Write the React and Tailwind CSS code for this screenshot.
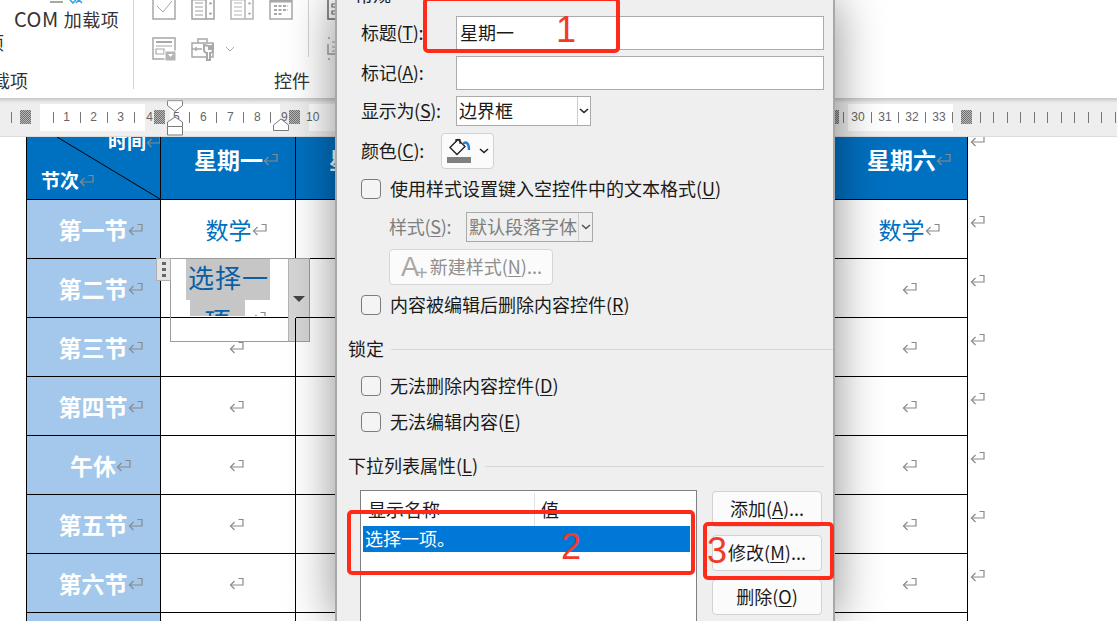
const ReturnMark = ({ className = '' }) => (
  <svg width="15" height="13" viewBox="0 0 15 13" fill="none" stroke="#8a8a8a" strokeWidth="1.2" className={`shrink-0 ${className}`}>
    <path d="M9.5 1.5h4.5v6.5H1.5" />
    <path d="M5.5 4L1.5 8l4 4" />
  </svg>
)

const Tick = () => (
  <div className="w-[13.5px] shrink-0 flex justify-center">
    <div className="w-px h-[11px] bg-[#777777]" />
  </div>
)

const Num = ({ children }) => (
  <div className="w-[13.5px] shrink-0 flex justify-center text-[12px] leading-none text-[#666666] whitespace-nowrap">{children}</div>
)

const Hatch = ({ className }) => (
  <div className={`h-[14px] shrink-0 bg-[repeating-conic-gradient(#707070_0_25%,#b8b8b8_0_50%)] bg-[length:2px_2px] ${className}`} />
)

const Ruler = () => (
  <div className="relative h-[39px] shrink-0 flex items-center bg-[#eeeeee] border-b border-[#dcdcdc] overflow-hidden font-['Liberation_Sans',sans-serif]">
    <div className="w-[20px] shrink-0 flex pl-[5px]"><Tick /></div>
    <Hatch className="w-[11px]" />
    <div className="w-[9px] shrink-0" />
    <div className="w-[105px] h-[27px] shrink-0 bg-white flex items-center pl-[6.25px]">
      <Tick /><Num>1</Num><Tick /><Num>2</Num><Tick /><Num>3</Num><Tick />
    </div>
    <div className="w-[9px] shrink-0 flex justify-center text-[12px] leading-none text-[#666666]">4</div>
    <Hatch className="w-[11px]" />
    <div className="w-[4.5px] shrink-0" />
    <div className="w-[110px] h-[27px] shrink-0 bg-white flex items-center">
      <Num>5</Num><Tick /><Num>6</Num><Tick /><Num>7</Num><Tick /><Num>8</Num><Tick />
    </div>
    <div className="w-[9.5px] shrink-0 flex justify-center text-[12px] leading-none text-[#666666]">9</div>
    <Hatch className="w-[11px]" />
    <div className="w-[9px] shrink-0" />
    <div className="w-[524px] h-[27px] shrink-0 bg-white flex items-center text-[12px] text-[#666666] leading-none">
      <span className="-ml-[3px]">10</span>
    </div>
    <Hatch className="w-[6px]" />
    <div className="w-[9px] shrink-0 flex justify-center"><div className="w-px h-[11px] bg-[#777777]" /></div>
    <div className="w-[105px] h-[27px] shrink-0 bg-white flex items-center pl-[3.25px]">
      <Num>30</Num><Tick /><Num>31</Num><Tick /><Num>32</Num><Tick /><Num>33</Num><Tick />
    </div>
    <div className="w-[8px] shrink-0" />
    <Hatch className="w-[11px]" />
    <div className="w-[1.25px] shrink-0" />
    {Array.from({ length: 11 }).map((_, i) => <Tick key={i} />)}
    {/* indent markers */}
    <svg width="18" height="38" viewBox="0 0 18 38" fill="#ffffff" stroke="#7a7a7a" className="absolute left-[166px] top-0">
      <path d="M1.5 2.5h15v5l-7.5 6-7.5-6z" />
      <path d="M9 19l7.5 5v4.5h-15V24z" />
      <path d="M1.5 28.5h15v8.5h-15z" />
    </svg>
    <svg width="18" height="14" viewBox="0 0 18 14" fill="#ffffff" stroke="#7a7a7a" className="absolute left-[272px] top-[20px]">
      <path d="M9 1l7.5 6v5.5h-15V7z" />
    </svg>
    <div className="absolute inset-x-0 top-0 h-[5px] bg-gradient-to-b from-[#c8c8c8] to-transparent" />
  </div>
)

const IconCheck = () => (
  <svg width="24" height="24" viewBox="0 0 24 24" fill="none" stroke="#a8a8a8" strokeWidth="1.5">
    <path d="M1 -3h22v24H1z" />
    <path d="M5 8l6 6L20 3" strokeWidth="1" />
  </svg>
)

const IconSpin = ({ light }) => (
  <svg width="24" height="24" viewBox="0 0 24 24" fill="none" stroke={light ? '#b4b4b4' : '#a0a0a0'} strokeWidth="1.5">
    <path d="M1 -3h22v24H1z" />
    <path d="M15 -3v24" />
    <path d="M4 5h8M4 9h8M4 13h8M4 17h8" strokeWidth="1.2" />
    <path d="M1 1h14" strokeWidth="3" />
    <path d="M18 6l1.5-2 1.5 2zM18 15l1.5 2 1.5-2z" fill="#a0a0a0" strokeWidth="0.5" />
  </svg>
)

const IconCalendar = () => (
  <svg width="24" height="24" viewBox="0 0 24 24" fill="none" stroke="#a8a8a8" strokeWidth="1.5">
    <path d="M1 -3h22v24H1z" />
    <path d="M1 3h22" strokeWidth="3" />
    <path d="M5 8h14M5 12h14M5 16h9" strokeWidth="2.2" strokeDasharray="3 1.5" />
  </svg>
)

const IconForm = () => (
  <svg width="25" height="24" viewBox="0 0 25 24" fill="none" stroke="#a8a8a8" strokeWidth="1.5">
    <path d="M1 1h22v21H1z" />
    <path d="M4 5h16" strokeWidth="2" />
    <path d="M4 9h16" strokeWidth="1" />
    <path d="M4 12h8v5H4z" strokeWidth="1.2" />
    <path d="M13 14h11v10H13z" fill="#b5b5b5" stroke="#ffffff" strokeWidth="1" />
    <path d="M16 17h5l-2.5 3z" fill="#ffffff" stroke="none" />
  </svg>
)

const IconTools = () => (
  <svg width="25" height="24" viewBox="0 0 25 24" fill="none" stroke="#a8a8a8" strokeWidth="1.5">
    <path d="M1 6h21v14H1z" />
    <path d="M7 6V2h9v4M1 12h10" />
    <path d="M5 10v4" />
    <path d="M13 8v5c0 2 2 3 3 3v7h3v-7c1 0 3-1 3-3V8l-2 1v3h-2V9z" fill="#ffffff" strokeWidth="2" />
  </svg>
)

const IconPartial = ({ dark }) => (
  <svg width="9" height="24" viewBox="0 0 9 24" fill="none" stroke={dark ? '#6a6a6a' : '#a8a8a8'} strokeWidth="1.5">
    {dark ? (
      <>
        <path d="M1 -3v24h8" />
        <path d="M5 6h4v3H5zM5 13h4v3H5z" strokeWidth="1.2" />
      </>
    ) : (
      <>
        <path d="M1 1h2M1 22h2M1 7v10h8" />
        <path d="M5 5h4M5 10h4M5 14h4" strokeWidth="1.2" />
      </>
    )}
  </svg>
)

const Ribbon = () => (
  <div className="h-[98px] shrink-0 bg-white flex overflow-hidden text-[18px] leading-none text-[#333333]">
    <div className="w-[134px] h-[89px] shrink-0 border-r border-[#d4d4d4] flex flex-col">
      <svg width="36" height="4" viewBox="0 0 36 4" fill="none" strokeWidth="1.5" className="ml-[50px] shrink-0">
        <path d="M0 2h13" stroke="#8a8a8a" />
        <path d="M20 0l3 3 3-3M26 3l3-3 3 3" stroke="#2b9fe0" />
      </svg>
      <div className="pl-[14px] mt-[5px] whitespace-nowrap tracking-[0.5px]"><span className="text-[20px] mr-[5px]">COM</span>加载项</div>
      <div className="-ml-[14px] mt-[4px]">项</div>
      <div className="-ml-[26px] mt-[20px] whitespace-nowrap">加载项</div>
    </div>
    <div className="w-[174px] shrink-0 pl-[18px]">
      <div className="flex gap-[15px] -mt-[2px]">
        <IconCheck /><IconSpin /><IconSpin light /><IconCalendar />
      </div>
      <div className="flex items-center gap-[14px] mt-[15px]">
        <IconForm />
        <IconTools />
        <svg width="10" height="6" viewBox="0 0 10 6" fill="none" stroke="#aaaaaa" className="-ml-[5px]"><path d="M1 1l4 4 4-4" /></svg>
      </div>
      <div className="ml-[122px] mt-[10px] whitespace-nowrap">控件</div>
    </div>
    <div className="w-px h-[57px] bg-[#d4d4d4] shrink-0" />
    <div className="pl-[18px] flex flex-col">
      <div className="-mt-[2px]"><IconPartial dark /></div>
      <div className="mt-[15px]"><IconPartial /></div>
    </div>
  </div>
)

const COLS = ['w-[134px]', 'w-[135px]', 'w-[135px]', 'w-[135px]', 'w-[135px]', 'w-[134px]', 'w-[133px]']
const DAYS = ['星期一', '星期二', '星期三', '星期四', '星期五', '星期六']
const PERIODS = ['第二节', '第三节', '第四节', '午休', '第五节', '第六节', '第七节']

const Cell = ({ width, className = '', children }) => (
  <div className={`${width} shrink-0 border-r border-b border-black flex items-center justify-center pl-[16px] ${className}`}>
    {children}
  </div>
)

const HeadCorner = () => (
  <div className="relative w-[134px] shrink-0 border-r border-b border-black bg-[#0070c0] text-white font-bold text-[19px] leading-[22px] overflow-hidden">
    <div className="flex items-center justify-end -mr-[1px] -mt-[7px]">
      <span>时间</span><ReturnMark />
    </div>
    <div className="flex items-center pl-[14px] mt-[17px]">
      <span>节次</span><ReturnMark />
    </div>
    <svg className="absolute inset-0 w-full h-full" viewBox="0 0 133 62" fill="none" stroke="#000000">
      <path d="M30 0l103 62" />
    </svg>
  </div>
)

const DocTable = () => (
  <div className="flex-1 bg-white overflow-hidden pl-[26px] text-[23px] leading-none">
    <div className="flex h-[63px]">
      <div className="flex border-l border-black">
        <HeadCorner />
        {DAYS.map((d, i) => (
          <Cell key={d} width={COLS[i + 1]} className="bg-[#0070c0] text-white font-bold text-[23px] pb-[18px]">
            <span>{d}</span><ReturnMark />
          </Cell>
        ))}
      </div>
      <div className="pl-[2px] -mt-[3px]"><ReturnMark /></div>
    </div>
    <div className="flex h-[59px]">
      <div className="flex border-l border-black">
        <Cell width={COLS[0]} className="bg-[#a3c8eb] text-white font-bold pr-[2px]">
          <span className="pt-px">第一节</span><ReturnMark />
        </Cell>
        {DAYS.map((d, i) => (
          <Cell key={d} width={COLS[i + 1]} className="text-[#0070c0]">
            <span className="pt-px">数学</span><ReturnMark />
          </Cell>
        ))}
      </div>
      <div className="pl-[2px] pt-[15px]"><ReturnMark /></div>
    </div>
    {PERIODS.map((p, r) => (
      <div key={p} className="flex h-[59px]">
        <div className="flex border-l border-black">
          <Cell width={COLS[0]} className="bg-[#a3c8eb] text-white font-bold pr-[2px]">
            <span className="pt-px">{p}</span><ReturnMark />
          </Cell>
          {DAYS.map((d, i) => (
            <Cell key={d} width={COLS[i + 1]} className="relative">
              <ReturnMark />
              {r === 0 && i === 0 && <ContentControl />}
            </Cell>
          ))}
        </div>
        <div className="pl-[2px] pt-[15px]"><ReturnMark /></div>
      </div>
    ))}
  </div>
)

const ContentControl = () => (
  <div className="absolute left-[9px] -top-px w-[140px] h-[84px] border border-[#9c9c9c] flex">
    <div className="absolute -left-[15px] -top-px w-[15px] h-[23px] bg-[#e4e4e4] border border-[#b0b0b0] flex flex-col items-center justify-center gap-[3px]">
      <div className="w-[4px] h-[3px] bg-[#666666]" />
      <div className="w-[4px] h-[3px] bg-[#666666]" />
      <div className="w-[4px] h-[3px] bg-[#666666]" />
    </div>
    <div className="flex-1 h-[57px] pr-[3px] bg-white overflow-hidden flex flex-col items-center text-[26px] text-[#0b5fa5] font-normal">
      <div className="bg-[#c6c6c6] h-[41px] flex items-center px-[2px] pb-[5px] tracking-[1px] pr-[1px] shrink-0">选择一</div>
      <div className="flex items-start shrink-0">
        <div className="bg-[#c6c6c6] w-[55px] h-[40px] text-center leading-[40px]">项</div>
        <ReturnMark className="ml-[6px] mt-[11px]" />
      </div>
    </div>
    <div className="w-[21px] bg-[#d6d6d6] border-l border-[#b4b4b4] flex items-center justify-center pb-[3px]">
      <div className="w-0 h-0 border-x-[6px] border-x-transparent border-t-[6px] border-t-[#444444]" />
    </div>
  </div>
)

const Chevron = ({ color = '#222222' }) => (
  <svg width="10" height="6" viewBox="0 0 10 6" fill="none" stroke={color} strokeWidth="1.6"><path d="M1 1l4 3.5L9 1" /></svg>
)

const Check = ({ mt, children }) => (
  <div className={`flex items-center h-[20px] pl-[24px] ${mt}`}>
    <div className="w-[20px] h-[20px] rounded-[4px] border-[1.5px] border-[#7c7c7c] bg-[#f4f4f4] shrink-0" />
    <div className="ml-[9px] pb-[3px] whitespace-nowrap">{children}</div>
  </div>
)

const U = ({ children }) => <span className="underline underline-offset-2 decoration-1">{children}</span>

const Section = ({ mt, children }) => (
  <div className={`flex items-center h-[24px] pl-[11px] ${mt}`}>
    <span className="whitespace-nowrap pb-[3px]">{children}</span>
    <div className="flex-1 h-px bg-[#d8d8d8] ml-[7px]" />
  </div>
)

const SideButton = ({ mt, children }) => (
  <div className={`h-[36px] rounded-[4px] border border-[#d2d2d2] bg-[#fbfbfb] flex items-center justify-center pb-[2px] ${mt}`}>{children}</div>
)

const Dialog = () => (
  <div className="absolute left-[335px] top-0 w-[500px] h-[621px] overflow-hidden bg-[#efefef] border-x-2 border-[#a8a8a8] text-[18px] leading-none text-[#1a1a1a] shadow-[0_0_45px_rgba(0,0,0,0.45)]">
    <div className="h-[16px] overflow-hidden relative">
      <span className="absolute left-[18px] -top-[15px]">常规</span>
    </div>
    <div className="flex items-center h-[34px] pl-[24px]">
      <div className="w-[95px] pb-[3px] whitespace-nowrap tracking-[-0.3px]">标题(<U>T</U>):</div>
      <div className="w-[368px] h-[34px] bg-white border border-[#aaaaaf] flex items-center pl-[3px] pb-[3px]">星期一</div>
    </div>
    <div className="flex items-center h-[34px] pl-[24px] mt-[6px]">
      <div className="w-[95px] pb-[3px] whitespace-nowrap tracking-[-0.3px]">标记(<U>A</U>):</div>
      <div className="w-[368px] h-[34px] bg-white border border-[#aaaaaf]" />
    </div>
    <div className="flex items-center h-[30px] pl-[24px] mt-[6px]">
      <div className="w-[95px] pb-[3px] whitespace-nowrap tracking-[-0.3px]">显示为(<U>S</U>):</div>
      <div className="w-[135px] h-[30px] bg-white border border-[#aaaaaa] flex items-center pl-[2px]">
        <span className="flex-1 pb-[3px]">边界框</span>
        <div className="w-[13px] h-full border-l border-[#cccccc] flex items-center justify-center"><Chevron /></div>
      </div>
    </div>
    <div className="flex items-center h-[36px] pl-[24px] mt-[7px]">
      <div className="w-[80px] pb-[3px] whitespace-nowrap tracking-[-0.3px]">颜色(<U>C</U>):</div>
      <div className="w-[53px] h-[36px] rounded-[4px] border border-[#d2d2d2] bg-[#fbfbfb] flex items-center pl-[5px] gap-[7px]">
        <svg width="25" height="26" viewBox="0 0 25 26" fill="none">
          <path d="M11 1.5l7 7-8 8-7-7z" stroke="#222222" strokeWidth="1.4" fill="#ffffff" />
          <path d="M9 4V1.5h4V6" stroke="#222222" strokeWidth="1.2" />
          <path d="M16 6c3-3 6-1 6 6" stroke="#1c7fd0" strokeWidth="2.4" />
          <path d="M0 19h24v6H0z" fill="#808080" />
        </svg>
        <Chevron />
      </div>
    </div>
    <Check mt="mt-[10px]">使用样式设置键入空控件中的文本格式(<U>U</U>)</Check>
    <div className="flex items-center h-[30px] pl-[52px] mt-[13px] text-[#7e7e7e]">
      <div className="w-[77px] pb-[3px] whitespace-nowrap tracking-[-0.3px]">样式(<U>S</U>):</div>
      <div className="w-[127px] h-[30px] border border-[#aaaaaa] flex items-center pl-[2px]">
        <span className="flex-1 pb-[3px] whitespace-nowrap">默认段落字体</span>
        <div className="w-[14px] h-full border-l border-[#cccccc] flex items-center justify-center shrink-0"><Chevron color="#555555" /></div>
      </div>
    </div>
    <div className="ml-[52px] mt-[7px] w-[164px] h-[36px] rounded-[4px] border border-[#d6d6d6] bg-[#fbfbfb] flex items-center pl-[11px] text-[#8e8e8e] whitespace-nowrap">
      <span className="text-[27px] text-[#a8a8a8] font-['Liberation_Sans',sans-serif]">A</span>
      <span className="text-[20px] text-[#a8a8a8] mt-[12px] -ml-[3px] mr-[2px] font-['Liberation_Sans',sans-serif]">+</span>
      <span className="pb-[3px]">新建样式(<U>N</U>)...</span>
    </div>
    <Check mt="mt-[10px]">内容被编辑后删除内容控件(<U>R</U>)</Check>
    <Section mt="mt-[22px]">锁定</Section>
    <Check mt="mt-[15px]">无法删除内容控件(<U>D</U>)</Check>
    <Check mt="mt-[16px]">无法编辑内容(<U>E</U>)</Check>
    <div className="pr-[9px]"><Section mt="mt-[22px]">下拉列表属性(<U>L</U>)</Section></div>
    <div className="flex pl-[23px] mt-[12px]">
      <div className="w-[337px] h-[140px] shrink-0 bg-white border border-[#7f7f87] pl-[2px]">
        <div className="flex h-[35px] pt-[2px]">
          <div className="w-[172px] border-r border-[#e2e2e2] pl-[5px] pt-[7px] whitespace-nowrap">显示名称</div>
          <div className="pl-[6px] pt-[7px]">值</div>
        </div>
        <div className="h-[26px] w-[327px] bg-[#0078d7] text-white pl-[2px] pb-[3px] flex items-center">选择一项。</div>
      </div>
      <div className="w-[110px] ml-[15px] shrink-0">
        <SideButton mt="mt-px"><span>添加(<U>A</U>)...</span></SideButton>
        <SideButton mt="mt-[8px]"><span>修改(<U>M</U>)...</span></SideButton>
        <SideButton mt="mt-[8px]"><span>删除(<U>O</U>)</span></SideButton>
      </div>
    </div>
  </div>
)

const Callout = ({ className, n, numClass }) => (
  <>
    <div className={`absolute border-[4px] border-[#ff2a1a] rounded-[5px] ${className}`} />
    <div className={`absolute text-[36px] leading-none text-[#f03a2a] font-['Liberation_Sans',sans-serif] ${numClass}`}>{n}</div>
  </>
)

export default function App() {
  return (
    <div className="relative w-[1117px] h-[621px] overflow-hidden flex flex-col bg-white font-['Noto_Sans_CJK_SC','Noto_Sans',sans-serif]">
      <Ribbon />
      <Ruler />
      <DocTable />
      <Dialog />
      <Callout className="left-[423px] -top-[3px] w-[197px] h-[56px]" n="1" numClass="left-[556px] top-[12px]" />
      <Callout className="left-[347px] top-[510px] w-[348px] h-[65px]" n="2" numClass="left-[561px] top-[529px]" />
      <Callout className="left-[703px] top-[522px] w-[131px] h-[58px]" n="3" numClass="left-[707px] top-[533px]" />
    </div>
  )
}
